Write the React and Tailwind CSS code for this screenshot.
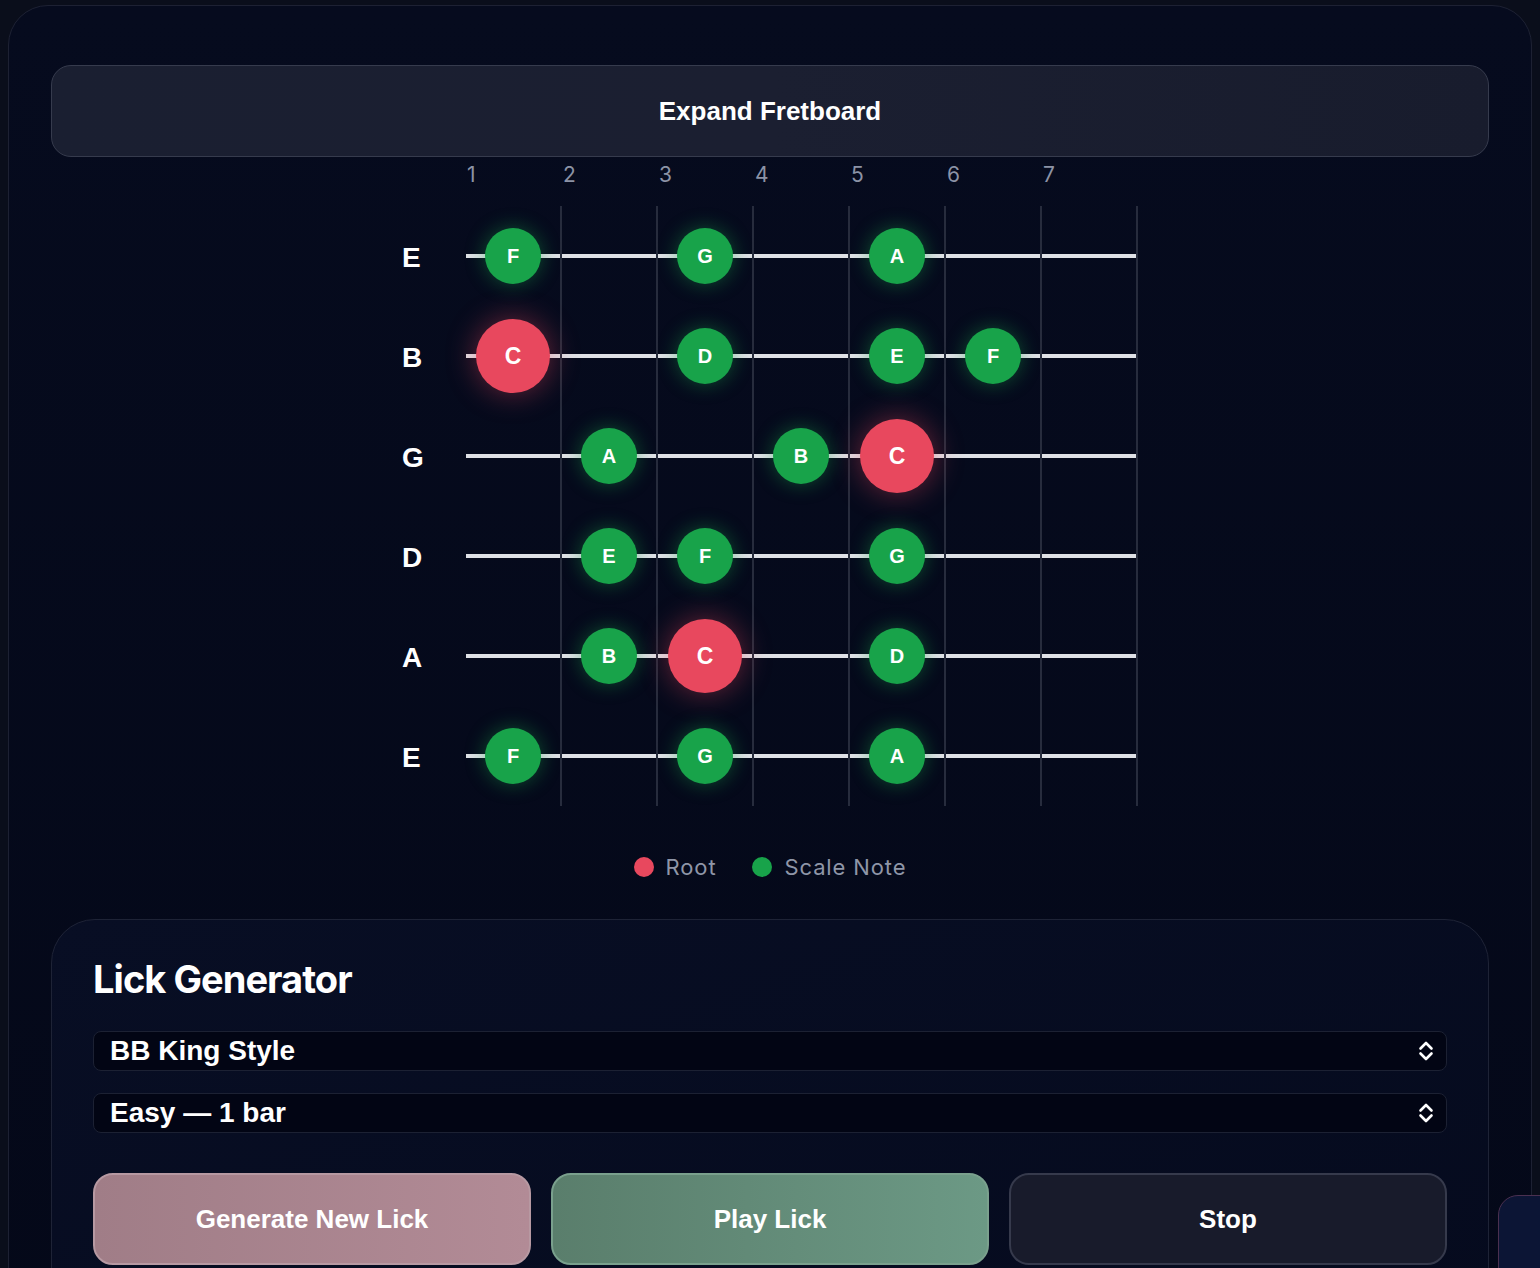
import React from 'react';

const FRETS = [1, 2, 3, 4, 5, 6, 7];

// string label + notes (fret -> [note, isRoot])
const STRINGS = [
  { name: 'E', notes: { 1: ['F'], 3: ['G'], 5: ['A'] } },
  { name: 'B', notes: { 1: ['C', true], 3: ['D'], 5: ['E'], 6: ['F'] } },
  { name: 'G', notes: { 2: ['A'], 4: ['B'], 5: ['C', true] } },
  { name: 'D', notes: { 2: ['E'], 3: ['F'], 5: ['G'] } },
  { name: 'A', notes: { 2: ['B'], 3: ['C', true], 5: ['D'] } },
  { name: 'E', notes: { 1: ['F'], 3: ['G'], 5: ['A'] } },
];

const Note = ({ label, root }) => {
  if (root) {
    return (
      <div className="relative z-10 w-[74px] h-[74px] rounded-full bg-[#e8485e] flex items-center justify-center shadow-[0_0_30px_rgba(232,72,94,0.45)]">
        <span className="text-white font-bold text-[23px] font-['Liberation_Sans',Arial,sans-serif]">{label}</span>
      </div>
    );
  }
  return (
    <div className="relative z-10 w-[56px] h-[56px] rounded-full bg-[#18a34a] flex items-center justify-center shadow-[0_0_20px_rgba(22,163,74,0.45)]">
      <span className="text-white font-bold text-[20px] font-['Liberation_Sans',Arial,sans-serif]">{label}</span>
    </div>
  );
};

const UpDown = () => (
  <svg width="16" height="22" viewBox="0 0 16 22" fill="none" stroke="white" strokeWidth="2.6" strokeLinecap="round" strokeLinejoin="round">
    <path d="M2.5 8.5 L8 3 L13.5 8.5" />
    <path d="M2.5 13.5 L8 19 L13.5 13.5" />
  </svg>
);

const Select = ({ value }) => (
  <div className="h-[40px] rounded-lg border border-[#1c2133] bg-[#020514] flex items-center justify-between pl-4 pr-3">
    <span className="text-white font-bold text-[28px] leading-none font-['Liberation_Sans',Arial,sans-serif]">{value}</span>
    <UpDown />
  </div>
);

export default function App() {
  return (
    <div className="min-h-screen bg-[#0a0e1b] pt-[5px] px-[8px] overflow-hidden">
      <div className="rounded-[40px] border border-[#1d2133] bg-gradient-to-b from-[#060b1e] to-[#040818] pt-[59px] px-[42px] pb-10">
        {/* Expand */}
        <button className="w-full h-[92px] rounded-[20px] border-[1.5px] border-[#363b4d] bg-gradient-to-r from-[#1a1f31] via-[#1b1f31] to-[#181c2d] text-white font-bold text-[26px] font-['Liberation_Sans',Arial,sans-serif]">
          Expand Fretboard
        </button>

        {/* Fretboard */}
        <div className="flex justify-center">
          <div className="flex flex-col">
            <div className="flex h-[49px] pt-[4px]">
              <div className="w-16" />
              {FRETS.map((f) => (
                <div key={f} className="w-24 pl-[1px] text-[21px] leading-[28px] text-[#8c93a6] font-['Inter',sans-serif]">
                  {f}
                </div>
              ))}
            </div>
            {STRINGS.map((s, i) => (
              <div key={i} className="flex h-[100px] items-center">
                <div className="w-16 pt-[4px] text-white font-bold text-[28px] font-['Liberation_Sans',Arial,sans-serif]">{s.name}</div>
                <div className="flex h-full">
                  {FRETS.map((f) => {
                    const n = s.notes[f];
                    return (
                      <div key={f} className="relative w-24 h-full border-r-2 border-[#272c3d] flex items-center justify-center">
                        <div className="absolute left-0 right-0 top-1/2 -translate-y-1/2 h-[4px] bg-[#dfe1e6]" />
                        {n && <Note label={n[0]} root={n[1]} />}
                      </div>
                    );
                  })}
                </div>
              </div>
            ))}
          </div>
        </div>

        {/* Legend */}
        <div className="mt-[47px] flex justify-center items-center gap-9 font-['Inter',sans-serif] text-[22px] leading-[28px] text-[#8f96a8] tracking-[0.04em]">
          <div className="flex items-center gap-3">
            <span className="w-5 h-5 rounded-full bg-[#e8485e]" />
            <span>Root</span>
          </div>
          <div className="flex items-center gap-3">
            <span className="w-5 h-5 rounded-full bg-[#18a34a]" />
            <span>Scale Note</span>
          </div>
        </div>

        {/* Lick Generator */}
        <div className="mt-[38px] rounded-[44px] border border-[#1e2336] bg-gradient-to-br from-[#080e24] to-[#050a1d] pt-[36px] px-[41px] pb-10">
          <h2 className="text-white font-bold text-[38px] leading-[46px] tracking-tight font-['Inter',sans-serif]">Lick Generator</h2>
          <div className="mt-[29px] flex flex-col gap-[22px]">
            <Select value="BB King Style" />
            <Select value="Easy — 1 bar" />
          </div>
          <div className="mt-[40px] grid grid-cols-3 gap-5">
            <button className="h-[92px] rounded-[20px] border-2 border-[#b799a2] bg-gradient-to-r from-[#a07d87] to-[#b28b96] text-white font-bold text-[26px] font-['Liberation_Sans',Arial,sans-serif]">
              Generate New Lick
            </button>
            <button className="h-[92px] rounded-[20px] border-2 border-[#7aa08d] bg-gradient-to-r from-[#5a7e6c] to-[#6c9985] text-white font-bold text-[26px] font-['Liberation_Sans',Arial,sans-serif]">
              Play Lick
            </button>
            <button className="h-[92px] rounded-[20px] border-2 border-[#363a4c] bg-[#181b2b] text-white font-bold text-[26px] font-['Liberation_Sans',Arial,sans-serif]">
              Stop
            </button>
          </div>
          <div className="h-40" />
        </div>
      </div>

      {/* floating widget peeking in at the corner */}
      <div className="fixed left-[1498px] top-[1195px] w-[160px] h-[160px] rounded-[20px] border border-[#4a3050] bg-[#0c1535]" />
    </div>
  );
}
